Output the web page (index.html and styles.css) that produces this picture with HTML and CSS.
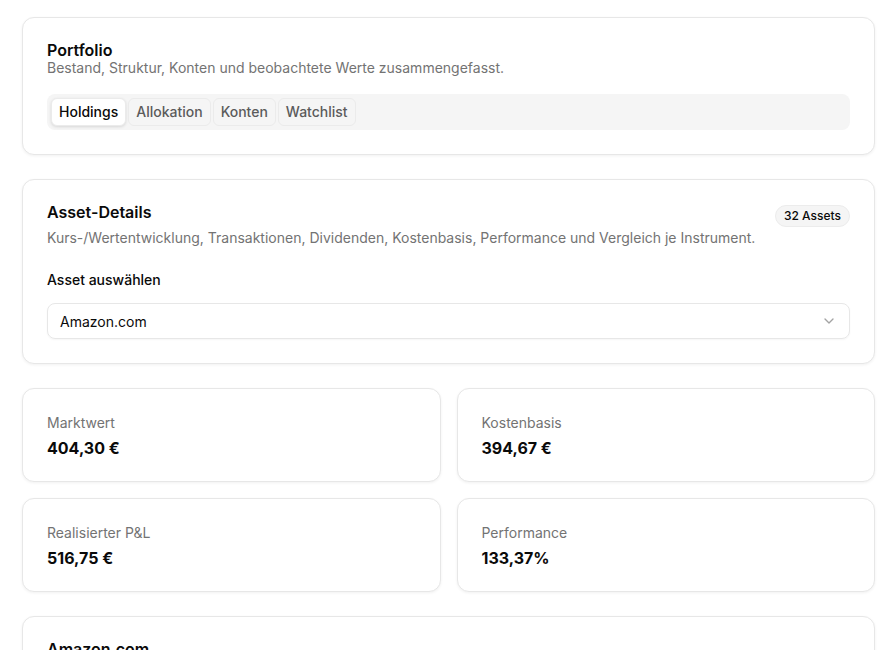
FILE: index.html
```html
<!DOCTYPE html>
<html lang="de">
<head>
  <meta charset="UTF-8">
  <meta name="viewport" content="width=device-width, initial-scale=1.0">
  <title>Portfolio</title>
  <link rel="stylesheet" href="styles.css">
</head>
<body>
<main class="page">

  <section class="card">
    <h2 class="card-title">Portfolio</h2>
    <p class="card-desc">Bestand, Struktur, Konten und beobachtete Werte zusammengefasst.</p>
    <div class="tabs">
      <button class="tab active">Holdings</button>
      <button class="tab">Allokation</button>
      <button class="tab">Konten</button>
      <button class="tab">Watchlist</button>
    </div>
  </section>

  <section class="card">
    <div class="card-head">
      <div>
        <h2 class="card-title">Asset-Details</h2>
        <p class="card-desc spaced">Kurs-/Wertentwicklung, Transaktionen, Dividenden, Kostenbasis, Performance und Vergleich je Instrument.</p>
      </div>
      <span class="badge">32 Assets</span>
    </div>
    <label class="field-label">Asset auswählen</label>
    <div class="select">
      <span>Amazon.com</span>
      <svg class="chevron" width="16" height="16" viewBox="0 0 24 24" fill="none" stroke="currentColor" stroke-width="2" stroke-linecap="round" stroke-linejoin="round"><path d="m6 9 6 6 6-6"/></svg>
    </div>
  </section>

  <div class="stats">
    <div class="card stat">
      <div class="stat-label">Marktwert</div>
      <div class="stat-value">404,30 €</div>
    </div>
    <div class="card stat">
      <div class="stat-label">Kostenbasis</div>
      <div class="stat-value">394,67 €</div>
    </div>
    <div class="card stat">
      <div class="stat-label">Realisierter P&amp;L</div>
      <div class="stat-value">516,75 €</div>
    </div>
    <div class="card stat">
      <div class="stat-label">Performance</div>
      <div class="stat-value">133,37%</div>
    </div>
  </div>

  <section class="card">
    <h2 class="card-title">Amazon.com</h2>
    <p class="card-desc spaced">Kursverlauf und Transaktionen</p>
  </section>

</main>
</body>
</html>
```

FILE: styles.css
```css
body {
  margin: 0;
  font-family: Inter, "Noto Sans", sans-serif;
  color: #0a0a0a;
  background: #ffffff;
}

.page {
  display: flex;
  flex-direction: column;
  gap: 24px;
  padding: 17px 15px 40px 22px;
}

.card {
  background: #fff;
  border: 1px solid #e7e7e7;
  border-radius: 12px;
  box-shadow: 0 1px 3px rgba(0,0,0,0.06);
  padding: 24px;
}

.card-title {
  margin: 0;
  font-size: 16px;
  line-height: 16px;
  font-weight: 600;
}

.card-desc {
  margin: 0;
  font-size: 14px;
  line-height: 20px;
  color: #737373;
}

.card-desc.spaced {
  margin-top: 8px;
}

.card-head {
  display: flex;
  justify-content: space-between;
  align-items: flex-start;
}

.badge {
  font-size: 12px;
  font-weight: 500;
  line-height: 16px;
  padding: 2px 8px;
  border: 1px solid #ececec;
  border-radius: 999px;
  background: #f5f5f5;
  margin-top: 1px;
}

.tabs {
  display: flex;
  gap: 2px;
  margin-top: 16px;
  padding: 4px;
  background: #f5f5f5;
  border-radius: 8px;
}

.tab {
  font-family: inherit;
  font-size: 14px;
  font-weight: 500;
  line-height: 20px;
  color: #5b5b5b;
  padding: 3px 7px;
  background: transparent;
  border: 1px solid #ebebeb;
  border-radius: 6px;
}

.tab.active {
  background: #fff;
  color: #0a0a0a;
  box-shadow: 0 1px 3px rgba(0,0,0,0.12);
}

.field-label {
  display: block;
  margin-top: 25px;
  font-size: 14px;
  font-weight: 500;
  line-height: 14px;
}

.select {
  display: flex;
  justify-content: space-between;
  align-items: center;
  margin-top: 16px;
  height: 34px;
  padding: 0 12px;
  border: 1px solid #e7e7e7;
  border-radius: 8px;
  box-shadow: 0 1px 2px rgba(0,0,0,0.04);
  font-size: 14px;
}

.chevron {
  color: #a3a3a3;
}

.stats {
  display: grid;
  grid-template-columns: 1fr 1fr;
  gap: 16px;
}

.stat {
  padding-bottom: 23px;
}

.stat-label {
  font-size: 14px;
  line-height: 20px;
  color: #737373;
}

.stat-value {
  margin-top: 5px;
  font-size: 16px;
  line-height: 20px;
  font-weight: 700;
}
```
